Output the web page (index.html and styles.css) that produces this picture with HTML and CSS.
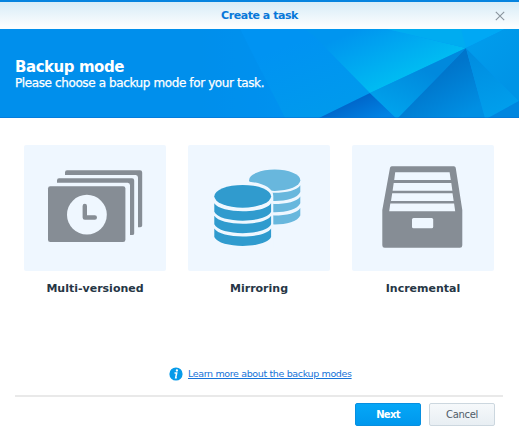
FILE: index.html
```html
<!DOCTYPE html>
<html lang="en">
<head>
<meta charset="utf-8">
<title>Create a task</title>
<link rel="stylesheet" href="styles.css">
</head>
<body>
<div class="dialog">
  <header class="titlebar">
    <h1 class="title">Create a task</h1>
    <button class="close" aria-label="Close"><svg width="10" height="10" viewBox="0 0 10 10"><path d="M.8.9 9.2 9.1M9.2.9.8 9.1" stroke="#89949d" stroke-width="1.1"/></svg></button>
  </header>
  <section class="banner">
    <svg class="facets" viewBox="0 29 519 89" preserveAspectRatio="none">
      <defs>
        <linearGradient id="a" gradientUnits="userSpaceOnUse" x1="345" y1="35" x2="372" y2="93"><stop offset="0" stop-color="#0095ef"/><stop offset="1" stop-color="#00bcf2"/></linearGradient>
        <linearGradient id="b" gradientUnits="userSpaceOnUse" x1="370" y1="94" x2="380" y2="118"><stop offset="0" stop-color="#0067cb"/><stop offset="1" stop-color="#0083e4"/></linearGradient>
        <linearGradient id="c" gradientUnits="userSpaceOnUse" x1="420" y1="68" x2="400" y2="116"><stop offset="0" stop-color="#0089dd"/><stop offset="1" stop-color="#00a2ec"/></linearGradient>
        <linearGradient id="d" gradientUnits="userSpaceOnUse" x1="435" y1="75" x2="460" y2="118"><stop offset="0" stop-color="#0075cb"/><stop offset="1" stop-color="#008fe3"/></linearGradient>
        <linearGradient id="e" gradientUnits="userSpaceOnUse" x1="475" y1="45" x2="500" y2="118"><stop offset="0" stop-color="#008bdf"/><stop offset="1" stop-color="#00a0ed"/></linearGradient>
        <linearGradient id="f" gradientUnits="userSpaceOnUse" x1="200" y1="0" x2="290" y2="0"><stop offset="0" stop-color="#008fec"/><stop offset="1" stop-color="#0094f3"/></linearGradient>
        <linearGradient id="g" gradientUnits="userSpaceOnUse" x1="300" y1="40" x2="330" y2="118"><stop offset="0" stop-color="#0093f2"/><stop offset="1" stop-color="#009aec"/></linearGradient>
        <linearGradient id="h" gradientUnits="userSpaceOnUse" x1="480" y1="35" x2="519" y2="75"><stop offset="0" stop-color="#009cec"/><stop offset="1" stop-color="#0094e6"/></linearGradient>
      </defs>
      <path fill="#008fec" d="M0 29h519v89H0z"/>
      <path fill="url(#f)" d="M195 29H500v89H195z"/>
      <path fill="url(#g)" d="M240 29H310L370 93 319 118H285z"/>
      <path fill="#008eea" d="M240 29 285 118H200V29z" opacity=".4"/>
      <path fill="url(#a)" d="M305 29H387L466 48 370 93 315 37z"/>
      <path fill="#00a8f4" d="M387 29H505L466 48z"/>
      <path fill="#00acf0" d="M387 29H461L466 48z"/>
      <path fill="url(#b)" d="M370 93 319 118H396z"/>
      <path fill="url(#c)" d="M466 48 370 93 396 118H398z"/>
      <path fill="url(#d)" d="M466 48 398 118H485z"/>
      <path fill="url(#e)" d="M466 48 485 118H488L519 101z"/>
      <path fill="url(#h)" d="M466 48 505 29H519V101z"/>
      <path fill="#0086df" d="M519 101V118H488z"/>
      <path fill="#0870d2" opacity=".55" d="M0 117h519v1H0z"/>
    </svg>
    <h2 class="heading">Backup mode</h2>
    <p class="lead">Please choose a backup mode for your task.</p>
  </section>
  <main class="modes">
    <div class="mode">
      <svg class="tile" viewBox="24 145 142 126">
        <g fill="#868d95">
          <path d="M65 175v-2.5q0-2.2 2-2.2h73q2.2 0 2.2 2.2v53q0 1.7-2 1.7h-2.2v-49.7q0-2.5-2.3-2.5z"/>
          <path d="M57 182.8v-2.4q0-2.2 2-2.2h73q2.2 0 2.2 2.2v53q0 1.7-2 1.7H130v-49.8q0-2.5-2.3-2.5z"/>
          <rect x="48" y="186.3" width="77.4" height="55.8" rx="2.3"/>
        </g>
        <circle cx="86.9" cy="214.7" r="19.9" fill="#eff7ff"/>
        <path d="M84.8 206v11.5h10" fill="none" stroke="#868d95" stroke-width="4.4" stroke-linecap="round" stroke-linejoin="round"/>
      </svg>
      <span class="name">Multi-versioned</span>
    </div>
    <div class="mode">
      <svg class="tile" viewBox="188 145 142 126">
        <g fill="#68b7dd">
          <ellipse cx="274.7" cy="180.2" rx="25.6" ry="10.7"/>
          <path d="M249 185.3c5 10 46 10 51.3 0v6.8c-5 12-46 12-51.3 0z"/>
          <path d="M249 196.4c5 10 46 10 51.3 0v6.9c-5 12-46 12-51.3 0z"/>
          <path d="M249 207.9c5 10 46 10 51.3 0v7.6c-5 12-46 12-51.3 0z"/>
        </g>
        <path fill="#eff7ff" d="M211.5 196c0-19.5 61.8-19.5 61.8 0v52h-61.8z"/>
        <g fill="#309bce">
          <ellipse cx="242.7" cy="196.3" rx="28.4" ry="11.4"/>
          <path d="M214.3 203.2c6 10.6 51 10.6 56.8 0v8.6c-5 11.8-51.8 11.8-56.8 0z"/>
          <path d="M214.3 215.7c6 10.6 51 10.6 56.8 0v8.6c-5 11.8-51.8 11.8-56.8 0z"/>
          <path d="M214.3 228.6c6 10.6 51 10.6 56.8 0v8.5c-5 11.8-51.8 11.8-56.8 0z"/>
        </g>
      </svg>
      <span class="name">Mirroring</span>
    </div>
    <div class="mode">
      <svg class="tile" viewBox="352 145 142 126">
        <path fill="#868d95" d="M391.8 166.2h62.1q1.5 0 1.8 1.6l6.6 42.2v35.3q0 2.5-2.4 2.5h-75.2q-2.4 0-2.4-2.5V210l7.7-42.2q.3-1.6 1.8-1.6z"/>
        <path fill="#eff7ff" d="M395.2 172.3h54.4l1.2 7.8h-56.6zM393.7 182.9h57.6l1.1 7.9h-59.8zM392.2 193.3h60.3l1.2 7.8h-62.7zM390.3 203.5h63.8l1.1 7.8h-66z"/>
        <rect x="412" y="218" width="21.2" height="10.3" rx="1.5" fill="#eff7ff"/>
      </svg>
      <span class="name">Incremental</span>
    </div>
  </main>
  <div class="help">
    <svg width="14" height="14" viewBox="0 0 14 14"><circle cx="7" cy="7" r="6.6" fill="#079be9"/><circle cx="7.9" cy="3.5" r="1.15" fill="#fff"/><path d="M5.5 6h2.2l-1 4.7h1.1" fill="none" stroke="#fff" stroke-width="1.5"/></svg>
    <a class="link" href="#">Learn more about the backup modes</a>
  </div>
  <footer class="actions">
    <button class="btn primary">Next</button>
    <button class="btn secondary">Cancel</button>
  </footer>
</div>
</body>
</html>
```
FILE: styles.css
```css
* { box-sizing: border-box; }
body { margin: 0; background: #fff; font-family: "DejaVu Sans", Verdana, sans-serif; }
h1, h2, p { margin: 0; }
button { font-family: inherit; padding: 0; }
.dialog { width: 519px; height: 431px; display: flex; flex-direction: column; background: #fff; }
.titlebar {
  height: 29px; border-top: 2px solid #0684df; flex: none;
  display: grid; grid-template-columns: 38px 1fr 38px; align-items: center;
  background: linear-gradient(#d7ecf7, #fbfdfe 90%);
}
.title { grid-column: 2; text-align: center; font-size: 11px; line-height: 14px; letter-spacing: -.45px; color: #0878d9; }
.close { border: 0; background: none; display: flex; justify-content: center; }
.banner { height: 89px; flex: none; position: relative; padding: 29px 15px 0; color: #fff; }
.facets { position: absolute; inset: 0; width: 100%; height: 100%; }
.heading { position: relative; font-size: 15px; line-height: 18px; letter-spacing: -.45px; white-space: nowrap; }
.lead { position: relative; font-size: 12px; line-height: 15px; letter-spacing: -.39px; white-space: nowrap; -webkit-text-stroke: .25px #fff; }
.modes { display: flex; gap: 22px; padding: 27px 24px 0; height: 248px; flex: none; }
.mode { width: 142px; display: flex; flex-direction: column; align-items: center; }
.tile { width: 142px; height: 126px; flex: none; background: #eff7ff; border-radius: 2px; }
.name { margin-top: 10px; font-size: 11px; font-weight: bold; line-height: 16px; color: #263645; white-space: nowrap; }
.help { display: flex; align-items: center; gap: 5px; height: 16px; padding-left: 169px; flex: none; }
.link { font-size: 9.5px; line-height: 14px; letter-spacing: -.36px; color: #1673d8; white-space: nowrap; }
.actions { margin: 13px 16px 0 15px; padding: 6px 8px 0 0; border-top: 2px solid #e9e9e9; display: flex; justify-content: flex-end; gap: 8px; }
.btn { width: 66px; height: 23px; border-radius: 2px; font-size: 10px; line-height: 21px; }
.primary { border: 1px solid #078fe0; background: linear-gradient(#05a7f7, #0098ed); color: #fff; font-weight: bold; letter-spacing: -.7px; }
.secondary { border: 1px solid #ccd7df; background: linear-gradient(#f6f9fb, #e8eef3); color: #505c68; letter-spacing: -.3px; }
```
